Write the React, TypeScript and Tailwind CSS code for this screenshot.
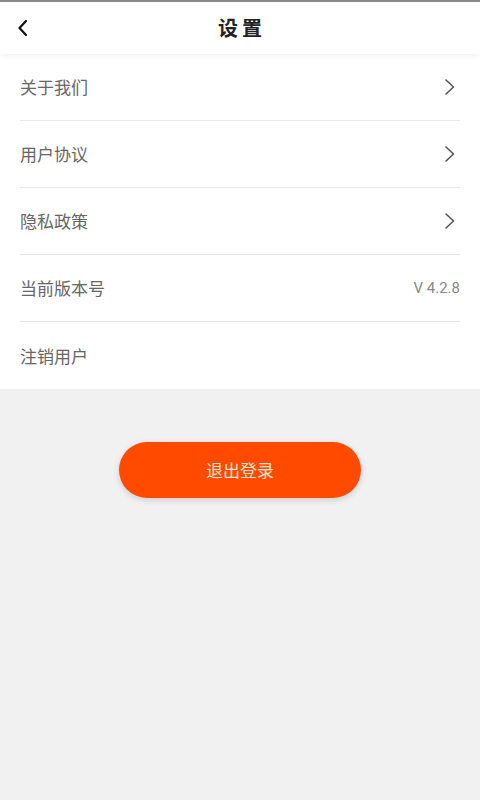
import React from "react";

const font = { fontFamily: '"Noto Sans CJK SC", "Noto Sans", sans-serif' };

function Chevron() {
  return (
    <svg width="12" height="18" viewBox="0 0 12 18" fill="none" className="mr-[4px]">
      <path d="M2 2 L9.5 9 L2 16" stroke="#555" strokeWidth="1.6" strokeLinecap="round" strokeLinejoin="round" />
    </svg>
  );
}

function Row({ label, right, last }: { label: string; right?: React.ReactNode; last?: boolean }) {
  return (
    <div className="px-5">
      <div className={`flex h-[67px] items-center justify-between ${last ? "" : "border-b border-[#e9e9e9]"}`}>
        <span className="text-[17px] text-[#666]">{label}</span>
        {right}
      </div>
    </div>
  );
}

export default function App() {
  return (
    <div className="flex min-h-[800px] w-full flex-col bg-[#f1f1f1]" style={font}>
      <div className="h-[2px] bg-[#8a8a8a]" />
      <div className="relative z-10 flex h-[52px] items-center justify-center bg-white shadow-[0_2px_6px_rgba(0,0,0,0.06)]">
        <div className="absolute left-[15px] top-[15px]">
          <svg width="16" height="22" viewBox="0 0 16 22" fill="none">
            <path d="M11 4 L4.5 11 L11 18" stroke="#111" strokeWidth="2.2" strokeLinecap="round" strokeLinejoin="round" />
          </svg>
        </div>
        <span className="pl-[4px] text-[20px] font-semibold tracking-[4px] text-[#222]">设置</span>
      </div>
      <div className="bg-white">
        <Row label="关于我们" right={<Chevron />} />
        <Row label="用户协议" right={<Chevron />} />
        <Row label="隐私政策" right={<Chevron />} />
        <Row label="当前版本号" right={<span className="text-[15px] text-[#888]" style={{ fontFamily: '"Roboto", sans-serif' }}>V 4.2.8</span>} />
        <Row label="注销用户" last />
      </div>
      <div className="flex justify-center pt-[53px]">
        <button className="flex h-[56px] w-[242px] items-center justify-center rounded-full bg-[#ff4a00] text-[17px] text-[#ffe3cc] shadow-[0_2px_6px_rgba(0,0,0,0.15)]">
          退出登录
        </button>
      </div>
    </div>
  );
}
